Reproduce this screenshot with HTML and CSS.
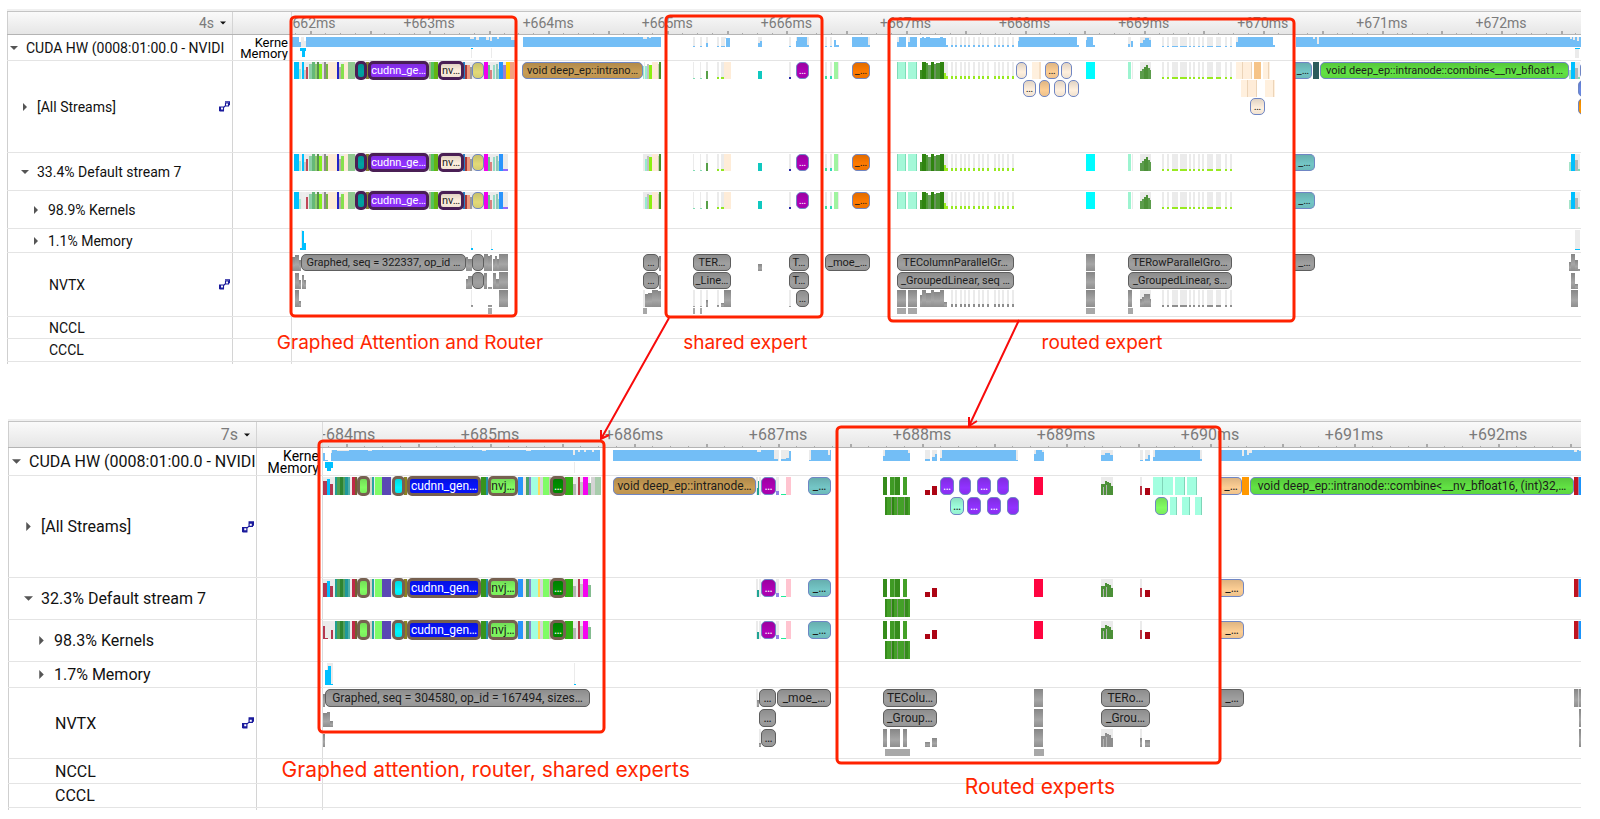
FILE: index.html
```
<!DOCTYPE html>
<html lang="en">
<head>
<meta charset="utf-8">
<title>CUDA timeline comparison</title>
<link rel="stylesheet" href="styles.css">
</head>
<body>
<svg class="defs" aria-hidden="true">
  <defs>
    <linearGradient id="steel" x1="0" y1="0" x2="0" y2="1">
      <stop offset="0" stop-color="#868686"/><stop offset=".6" stop-color="#a6a6a6"/><stop offset="1" stop-color="#8e8e8e"/>
    </linearGradient>
    <symbol id="down" viewBox="0 0 8 8"><path d="M0 2h8L4 6z" fill="currentColor"/></symbol>
    <symbol id="right" viewBox="0 0 8 8"><path d="M2 0v8l4-4z" fill="currentColor"/></symbol>
    <symbol id="link" viewBox="0 0 11 11">
      <path d="M1.500 6h3v3h-3zM6.500 2h3v3h-3zM4.500 6.500L6.700 4.500M.5 5.500v4.500M5 10H.5M6 .8h4.500v3.500" fill="none" stroke="#1a1a9c" stroke-width="1.100"/>
    </symbol>
  </defs>
</svg>
<main class="page">
  <section class="panel first" data-start="292" data-width="1289">
    <div class="row head">
      <div class="name"><button class="scale" type="button">4s <svg class="tri"><use href="#down"/></svg></button></div>
      <div class="legend"></div>
      <div class="track ruler" data-tick="310" data-step="119.1" data-first="662" data-count="11"></div>
    </div>
    <div class="row hw">
      <div class="name l0"><button class="toggle" type="button" aria-label="Collapse"><svg class="tri"><use href="#down"/></svg></button><span class="text">CUDA HW (0008:01:00.0 - NVIDI</span></div>
      <div class="legend"><span>Kerne</span><span>Memory</span></div>
      <div class="track"><div class="lane" data-lane="a.load"></div><div class="lane" data-lane="a.loadmem"></div></div>
    </div>
    <div class="row all">
      <div class="name l1"><button class="toggle" type="button" aria-label="Expand"><svg class="tri"><use href="#right"/></svg></button><span class="text">[All Streams]</span><svg class="link"><use href="#link"/></svg></div>
      <div class="legend"></div>
      <div class="track"><div class="lane" data-lane="a.all0"></div><div class="lane" data-lane="a.all1"></div><div class="lane" data-lane="a.all2"></div></div>
    </div>
    <div class="row stream">
      <div class="name l1"><button class="toggle" type="button" aria-label="Collapse"><svg class="tri"><use href="#down"/></svg></button><span class="text">33.4% Default stream 7</span></div>
      <div class="legend"></div>
      <div class="track"><div class="lane" data-lane="a.stream"></div></div>
    </div>
    <div class="row stream">
      <div class="name l2"><button class="toggle" type="button" aria-label="Expand"><svg class="tri"><use href="#right"/></svg></button><span class="text">98.9% Kernels</span></div>
      <div class="legend"></div>
      <div class="track"><div class="lane" data-lane="a.kernels"></div></div>
    </div>
    <div class="row mem">
      <div class="name l2"><button class="toggle" type="button" aria-label="Expand"><svg class="tri"><use href="#right"/></svg></button><span class="text">1.1% Memory</span></div>
      <div class="legend"></div>
      <div class="track"><div class="lane" data-lane="a.mem"></div></div>
    </div>
    <div class="row nvtx">
      <div class="name l2 leaf"><span class="text">NVTX</span><svg class="link"><use href="#link"/></svg></div>
      <div class="legend"></div>
      <div class="track"><div class="lane" data-lane="a.nv0"></div><div class="lane" data-lane="a.nv1"></div><div class="lane" data-lane="a.nv2"></div><div class="lane short" data-lane="a.nv3"></div></div>
    </div>
    <div class="row thin"><div class="name l2 leaf"><span class="text">NCCL</span></div><div class="legend"></div><div class="track"></div></div>
    <div class="row thin"><div class="name l2 leaf"><span class="text">CCCL</span></div><div class="legend"></div><div class="track"></div></div>
    <div class="row tail"><div class="name"></div><div class="legend"></div><div class="track"></div></div>
  </section>

  <section class="panel second" data-start="323" data-width="1258">
    <div class="row head">
      <div class="name"><button class="scale" type="button">7s <svg class="tri"><use href="#down"/></svg></button></div>
      <div class="legend"></div>
      <div class="track ruler" data-tick="346" data-step="144" data-first="684" data-count="9"></div>
    </div>
    <div class="row hw">
      <div class="name l0"><button class="toggle" type="button" aria-label="Collapse"><svg class="tri"><use href="#down"/></svg></button><span class="text">CUDA HW (0008:01:00.0 - NVIDI</span></div>
      <div class="legend"><span>Kerne</span><span>Memory</span></div>
      <div class="track"><div class="lane" data-lane="b.load"></div><div class="lane" data-lane="b.loadmem"></div></div>
    </div>
    <div class="row all">
      <div class="name l1"><button class="toggle" type="button" aria-label="Expand"><svg class="tri"><use href="#right"/></svg></button><span class="text">[All Streams]</span><svg class="link"><use href="#link"/></svg></div>
      <div class="legend"></div>
      <div class="track"><div class="lane" data-lane="b.all0"></div><div class="lane" data-lane="b.all1"></div></div>
    </div>
    <div class="row stream">
      <div class="name l1"><button class="toggle" type="button" aria-label="Collapse"><svg class="tri"><use href="#down"/></svg></button><span class="text">32.3% Default stream 7</span></div>
      <div class="legend"></div>
      <div class="track"><div class="lane" data-lane="b.stream"></div><div class="lane" data-lane="b.stream1"></div></div>
    </div>
    <div class="row stream">
      <div class="name l2"><button class="toggle" type="button" aria-label="Expand"><svg class="tri"><use href="#right"/></svg></button><span class="text">98.3% Kernels</span></div>
      <div class="legend"></div>
      <div class="track"><div class="lane" data-lane="b.kernels"></div><div class="lane" data-lane="b.stream1"></div></div>
    </div>
    <div class="row mem">
      <div class="name l2"><button class="toggle" type="button" aria-label="Expand"><svg class="tri"><use href="#right"/></svg></button><span class="text">1.7% Memory</span></div>
      <div class="legend"></div>
      <div class="track"><div class="lane" data-lane="b.mem"></div></div>
    </div>
    <div class="row nvtx">
      <div class="name l2 leaf"><span class="text">NVTX</span><svg class="link"><use href="#link"/></svg></div>
      <div class="legend"></div>
      <div class="track"><div class="lane" data-lane="b.nv0"></div><div class="lane" data-lane="b.nv1"></div><div class="lane" data-lane="b.nv2"></div><div class="lane short" data-lane="b.nv3"></div></div>
    </div>
    <div class="row thin"><div class="name l2 leaf"><span class="text">NCCL</span></div><div class="legend"></div><div class="track"></div></div>
    <div class="row thin"><div class="name l2 leaf"><span class="text">CCCL</span></div><div class="legend"></div><div class="track"></div></div>
    <div class="row tail"><div class="name"></div><div class="legend"></div><div class="track"></div></div>
  </section>

  <svg class="marks" viewBox="0 0 1600 819" preserveAspectRatio="none" aria-hidden="true">
    <g class="frames">
      <rect x="291" y="17" width="225" height="299" rx="4"/>
      <rect x="666" y="16" width="156" height="301" rx="4"/>
      <rect x="889" y="19" width="405" height="302" rx="4"/>
      <rect x="319" y="441" width="285" height="291" rx="4"/>
      <rect x="837" y="427" width="383" height="336" rx="4"/>
    </g>
    <path class="arrow" d="M669 318L601 439M601 430v9l8-4M1019 320L969 426M969 417v9l8-5"/>
  </svg>
  <p class="note n1">Graphed Attention and Router</p>
  <p class="note n2">shared expert</p>
  <p class="note n3">routed expert</p>
  <p class="note big n4">Graphed attention, router, shared experts</p>
  <p class="note big n5">Routed experts</p>
</main>
<script src="timeline.js"></script>
</body>
</html>
```
FILE: styles.css
```
* { box-sizing: border-box; }
body { margin: 0; background: #fff; color: #111; font-family: Roboto, "Liberation Sans", sans-serif; }
.defs { display: block; width: 0; height: 0; }
.page { position: relative; display: flex; flex-direction: column; gap: 55px; padding: 9px 19px 9px 7px; }

.panel { border-top: 2px solid #f0f0f0; font-size: 14px; }
.first { --cols: 226px 59px 1fr; --lane: 17px; --gap: 1px; --load: 10px; --memlane: 20px; --short: 6px; }
.second { --cols: 249px 66px 1fr; --lane: 18px; --gap: 2px; --load: 11px; --memlane: 22px; --short: 7px; margin-left: 1px; font-size: 16px; }

.row { display: grid; grid-template-columns: var(--cols); border-bottom: 1px solid #e4e4e4; }
.name { display: flex; align-items: center; gap: 8px; min-width: 0; padding-right: 2px; overflow: hidden; border-left: 1px solid #cfcfcf; border-right: 1px solid #d4d4d4; }
.legend { display: flex; flex-direction: column; align-items: flex-end; justify-content: center; overflow: hidden; border-right: 1px solid #dcdcdc; font-size: 13px; line-height: 11px; color: #000; }
.second .legend { font-size: 14px; line-height: 12px; }
.legend span { padding-right: 3px; }
.text { flex: 1; min-width: 0; overflow: hidden; white-space: nowrap; }
.track { display: flex; flex-direction: column; gap: var(--gap); min-width: 0; padding-top: 1px; overflow: hidden; }

.head { min-height: 24px; border-top: 1px solid #c4c4c4; border-bottom-color: #b4b4b4; background: linear-gradient(#fafafa, #e6e6e6); }
.second .head { min-height: 27px; }
.head .name { justify-content: flex-end; padding-right: 6px; }
.hw { min-height: 26px; }
.hw .track { gap: 1px; padding-top: 2px; }
.all { min-height: 92px; }
.stream { min-height: 38px; }
.mem { min-height: 24px; }
.nvtx { min-height: 64px; }
.thin { min-height: 22px; }
.tail { min-height: 2px; border-bottom: 0; }
.first .thin + .thin { min-height: 23px; }
.second .hw { min-height: 28px; }
.second .all { min-height: 102px; }
.second .stream { min-height: 42px; }
.second .mem { min-height: 26px; }
.second .nvtx { min-height: 71px; }
.second .thin { min-height: 25px; }
.second .thin + .thin { min-height: 24px; }

.l0 { padding-left: 2px; padding-right: 0; }
.l1 { padding-left: 13px; }
.l2 { padding-left: 24px; }
.leaf { padding-left: 41px; }
.second .l0 { padding-left: 3px; }
.second .l1 { padding-left: 15px; }
.second .l2 { padding-left: 28px; }
.second .leaf { padding-left: 46px; }

button { padding: 0; border: 0; background: none; color: #555; font: inherit; line-height: 1; }
.toggle { display: flex; }
.scale { display: flex; align-items: center; gap: 6px; color: #7b7b7b; }
.tri { width: 8px; height: 8px; }
.second .toggle .tri { width: 9px; height: 9px; }
.scale .tri { width: 6px; height: 6px; color: #111; }
.link { flex: none; width: 11px; height: 11px; }
.second .link { width: 12px; height: 12px; }

.ruler { position: relative; color: #7b7b7b; }
.ruler span { position: absolute; top: 3px; line-height: 16px; transform: translateX(-50%); }
.second .ruler span { top: 5px; }
.ruler svg { position: absolute; bottom: 0; left: 0; width: 100%; height: 3px; }

.lane { position: relative; flex: none; height: var(--lane); }
.hw .lane { height: var(--load); }
.mem .lane { height: var(--memlane); }
.short { height: var(--short); }
.lane svg { display: block; width: 100%; height: 100%; }

.pill { position: absolute; top: 0; height: 100%; overflow: hidden; border: 1px solid #6f86c4; border-radius: 5px; background-image: linear-gradient(rgba(0,0,0,.12), rgba(0,0,0,0) 60%, rgba(0,0,0,.06)); color: #1c1c1c; font-size: 11px; line-height: 15px; text-align: center; white-space: nowrap; }
.second .pill { font-size: 12px; line-height: 16px; }
.gray { background-color: #a0a0a0; border-color: #5e5e5e; }
.cream { background-color: #fff0de; }
.sand { background-color: #fdce94; }
.gold { background-color: #c99d55; }
.khaki { background-color: #e2da78; }
.teal { background-color: #74c6c6; }
.green { background-color: #62e344; }
.orange { background-color: #ff7a00; }
.amber { background-color: #ff9600; }
.royal { background-color: #6a8ae6; }
.plum { background-color: #b000b6; color: #fff; }
.purple { background-color: #9132ff; color: #fff; }
.mint { background-color: #9effdc; }
.lime { background-color: #82fc62; }
.sea { background-color: #00a3a3; }
.aqua { background-color: #00f6ff; }
.blue { background-color: #0714ff; color: #fff; }
.forest { background-color: #009000; color: #fff; }
.thick { top: -1px; height: calc(100% + 2px); border: 3px solid #4a1f55; line-height: 13px; }
.second .thick { border-color: #766050; line-height: 14px; }
.cut { border-left: 0; border-top-left-radius: 0; border-bottom-left-radius: 0; }

.marks { position: absolute; top: 0; left: 0; width: 100%; height: 819px; pointer-events: none; }
.frames { fill: none; stroke: #ff2200; stroke-width: 3; }
.arrow { fill: none; stroke: #f80b0b; stroke-width: 2; }
.note { position: absolute; margin: 0; color: #ff2600; font-family: Inter, "Liberation Sans", sans-serif; font-size: 19px; line-height: 24px; white-space: nowrap; }
.big { font-size: 21px; }
.n1 { left: 17.3%; top: 331px; }
.n2 { left: 42.7%; top: 331px; }
.n3 { left: 65.1%; top: 331px; }
.n4 { left: 17.6%; top: 758px; }
.n5 { left: 60.3%; top: 775px; }
```
FILE: timeline.js
```
// Bars are "x width height colour", separated by commas. A height of * fills the
// lane, a negative height hangs from the top. Colour g is the idle backdrop,
// b the load blue, s the NVTX steel.
const colours = { g: '#ebebeb', b: '#73bef6', s: 'url(#steel)', c: '#00c0ff' };

const spread = (xs, h, c) => xs.map(v => {
  const [x, w] = Array.isArray(v) ? v : [v, 2];
  return `${x} ${w} * g,${x} ${w} ${h} ${c}`;
}).join(',');

const dotsA = [951, 955, 960, 964, 968, 973, 978, 982, 987, 994, 998, 1002, 1007, 1012];
const dotsB = [1162, 1167, [1172, 6], [1180, 7], 1185, 1189, 1193, 1198, 1202, [1207, 6], [1216, 5], 1225, 1230];

const graphA = '294 214 * g,294 5 * c,299 2 10 #a8ead0,302 2 * c,304 2 9 #c8c8c8,306 2 12 #c04858,309 3 15 #8ccfa8,312 3 * #66b878,315 2 15 #8fcc70,317 2 * #5a8f50,319 3 15 #84f020,322 2 * #e4dce0,324 2 * #8c8c8c,326 2 15 #78b840,328 9 * #feebd6,337 2 * #2222c8,339 2 12 #b8b0a8,341 3 15 #86e04c,344 4 * #feebd6,348 7 * #90c890,366 3 * #84842c,429 2 * #a4b48c,431 3 * #54c458,434 4 * #64b414,463 2 * #2a80c4,465 2 14 #a43838,467 3 14 #f0987c,470 2 12 #9a9a9a,484 4 * #f000ee,488 2 14 #66c088,490 2 9 #d88080,493 2 14 #94dcc4,496 2 15 #90c8b8,498 1 10 #94dcc4,499 4 * #2a94fc';
const greensA = '920 2 9 #3f8f22,922 4 * #2f8410,926 2 16 #4f9a38,928 3 14 #689e5c,931 3 * #2f8410,934 2 15 #68945c,936 4 16 #489430,940 4 * #2f8410,944 4 * g,944 2 6 #9cec20,946 2 3 #9cec20';
const histA = '1140 11 * g,1140 2 8 #5c9c4c,1142 2 10 #5c9c4c,1144 2 12 #4c9038,1146 2 14 #4c9038,1148 2 11 #5c9c4c,1150 1 9 #5c9c4c';
const midA = '693 1 * g,700 1 * g,693 2 1 #84dcb4,700 2 1 #84dcb4,706 2 * g,706 2 8 #58a048,717 2 * g,717 2 2 #90e820,721 3 * g,721 3 2 #90e820,724 7 * #feecd8,758 4 8 #10c8c0,789 2 * g,789 2 2 #2828a8,825 2 * g,825 2 3 #44e098,830 2 * g,830 2 3 #30d8b8,834 4 * #a0f4a0,838 1 * g'
  + ',897 9 * #a4f8d8,908 9 * #a4f8d8,897 1 * #7edcb8,905 1 * #7edcb8,916 1 * #7edcb8,' + greensA + ',' + spread(dotsA, 3, '#98ea20')
  + ',1086 9 * #00fcff,1128 3 * #9cf4d0,1132 1 * g,' + histA + ',' + spread(dotsB, 2, '#98ea20');
const endA = '1569 2 9 #a4e4c8,1571 4 * c,1575 5 * g,1575 3 11 #b0b8b8,1578 2 2 #84dcb4';
const tailA = '644 1 * g,645 2 12 #98ecd0,647 2 15 #c0c0c0,649 3 14 #8cf010,652 6 * #feead6,658 1 15 #c8d0b8,659 2 * #489028';
const pillsA = [[355, 12, 'sea thick'], [368, 61, 'purple thick', 'cudnn_ge…'], [438, 26, 'cream thick', 'nv…'], [472, 12, 'khaki'], [796, 13, 'plum', '…'], [852, 18, 'orange', '_…']];
const streamA = { bars: graphA + ',503 5 2 #9468fc,643 3 * g,645 16 * g,' + tailA + ',' + midA + ',' + endA, pills: [...pillsA, [1295, 20, 'teal cut', '_…']] };

const graphB = '323 267 * g,331 1 * g,335 2 * #20a090,337 3 * #50a050,340 3 * #2f8430,343 2 * #50a060,345 3 * #20989a,348 2 * #50b0a8,350 2 * g,352 3 * #c02848,355 2 * #706030,370 2 * #d8d4c8,372 2 * #2ca4a4,375 7 * #80fc66,382 9 * #5a48b4,404 3 * #8a8420,481 5 * #36941c,486 2 * #2890a8,518 5 * #2a94fc,523 3 * #f4ece0,526 3 * #48a468,529 2 * #8888d0,531 7 * #a2ffe0,538 2 * #fcdc5c,540 3 * #d8d8d8,543 6 * #80fc66,549 2 * #c8c8b8,565 8 * #32b014,573 3 11 #b4b8b4,576 2 * #e8e8e8,578 2 * #b43c4c,580 3 13 #c4c4c4,583 5 * #f404f0,588 3 12 #84bc90';
const startB = '323 4 14 #b43850,327 3 16 c,330 3 11 #b43850,';
const greens0 = '883 4 * #368c1c,890 5 * #3f9a24,895 5 * #368c1c,894 1 * #6cb058,903 4 * #44a028';
const greens1 = '885 25 * #44a028,885 2 * #368c1c,891 1 * #7a9a6c,892 2 * #2f8414,897 1 * #7a9a6c,904 1 * #7a9a6c,905 3 * #368c1c';
const shapeB = c => `1101 12 * g,1101 2 11 ${c},1103 2 11 ${c},1105 2 14 ${c},1107 2 13 ${c},1109 2 12 ${c},1111 2 9 ${c},1103 1 8 #b4b4b4,1106 1 10 #b4b4b4`;
const midB = '756 2 * g,757 2 7 #20a494,759 2 * g,776 3 * g,776 3 4 #9080e8,781 5 1 #20ec98,786 5 * #ffc4d0,' + greens0
  + ',925 5 5 #ac0414,932 5 9 #ac0414,1034 9 * #ff0440,' + shapeB('#4c9038') + ',1140 2 * g,1140 2 9 #b83040,1145 5 7 #ac0414,1574 4 * #c01420,1578 1 * #9880a8,1579 3 * #1a94fc';
const pillsB = [[357, 13, 'lime thick'], [392, 13, 'aqua thick'], [407, 74, 'blue thick', 'cudnn_gen…'], [488, 30, 'lime thick', 'nvj…'], [550, 16, 'forest thick', '…'], [761, 15, 'plum', '…'], [808, 23, 'teal', '_…']];

const lanes = {
  'a.load': { bars: '292 7 10 b,299 2 5 b,301 3 * g,304 3 6 g,306 211 * b,470 4 -2 g,476 3 -3 g,486 3 -3 g,490 2 -4 g,497 2 -2 g,511 4 -3 g,523 138 * b,643 4 -2 g,649 2 -1 g,'
    + spread([693, 700], 1, 'b') + ',706 2 * g,706 2 4 b,717 2 * g,717 2 1 b,721 4 * g,721 4 1 b,724 2 -2 g,726 4 9 b,758 4 * g,758 4 4 b,760 2 6 b,789 2 * g,789 2 1 b,796 13 * b,796 1 -4 g,807 2 -8 g,825 2 * g,825 2 1 b,830 2 * g,830 2 1 b,834 2 7 b,836 3 2 b,852 18 * b,868 2 -8 g,'
    + '897 9 * b,897 2 -5 g,908 9 * b,908 2 -5 g,920 26 9 b,922 2 10 b,926 4 10 b,940 3 10 b,944 4 2 b,' + spread(dotsA, 2, 'b') + ',1018 59 * b,1077 2 2 b,1018 1 -4 g,1086 7 * b,1093 2 2 b,1086 1 -3 g,1128 3 * g,1128 2 3 b,1131 2 6 b,1140 11 * g,1140 11 4 b,1143 8 7 b,1145 4 9 b,' + spread(dotsB, 1, 'b') + ',1236 37 * b,1236 2 -5 g,1273 2 2 b,1296 286 * b,1313 2 -2 g,1317 2 -7 g,1570 2 -2 g,1573 2 -3 g,1577 2 -4 g' },
  'a.loadmem': { bars: '300 6 -3 c,302 3 -9 c,471 1 * g,471 2 -1 c,491 1 * g,1575 4 * g,1575 5 -1 c' },
  'a.all0': { bars: graphA + ',503 3 14 #9c80d0,506 4 * #ffd400,510 4 * #f4a080,643 4 13 #98ecd0,' + tailA + ',' + midA
      + ',1032 9 * #fff0de,1039 2 * #f6dfc4,1236 6 * #fff0de,1242 9 * #ffeedb,1242 1 * #ecd4b8,1251 1 * #ecd4b8,1254 7 * #f6c488,1263 7 * #fff0de,1268 1 * #ecd4b8,1313 6 * #2c5c5c,' + endA,
    pills: [...pillsA, [522, 121, 'gold', 'void deep_ep::intrano…'], [1016, 11, 'cream'], [1045, 14, 'sand', '…'], [1061, 11, 'cream'], [1295, 17, 'teal cut', '_…'], [1320, 249, 'green', 'void deep_ep::intranode::combine<__nv_bfloat1…'], [1580, 16, 'royal']] },
  'a.all1': { bars: '1241 6 * #fff0de,1247 10 * #feecd8,1247 1 * #ecd4b8,1256 1 * #ecd4b8,1265 10 * #fff0de,1273 1 * #ecd4b8',
    pills: [[1023, 13, 'cream', '…'], [1039, 11, 'sand'], [1054, 12, 'cream'], [1068, 11, 'cream'], [1578, 16, 'royal']] },
  'a.all2': { pills: [[1250, 15, 'cream', '…'], [1578, 16, 'amber']] },
  'a.stream': streamA,
  'a.kernels': { bars: streamA.bars + ',302 4 * #ededed', pills: streamA.pills },
  'a.mem': { bars: '301 2 * g,302 2 19 c,304 2 7 c,300 5 2 c,471 1 * g,471 2 2 c,491 1 * g,491 2 1 c,1575 5 * g,1575 5 1 c' },
  'a.nv0': { bars: '292 3 14 s,295 4 16 s,299 2 11 s,466 2 14 s,468 4 12 s,484 4 17 s,488 2 15 s,490 2 16 s,493 2 12 s,495 2 15 s,497 2 12 s,499 9 * s,659 2 15 s,758 4 7 s,1086 9 * s,1569 2 9 s,1571 4 * s,1575 3 11 s,1578 2 2 s',
    pills: [[301, 165, 'gray', 'Graphed, seq = 322337, op_id …'], [472, 12, 'gray'], [643, 16, 'gray', '…'], [693, 38, 'gray', 'TER…'], [789, 20, 'gray', 'T…'], [825, 45, 'gray', '_moe_…'], [897, 117, 'gray', 'TEColumnParallelGr…'], [1128, 104, 'gray', 'TERowParallelGro…'], [1295, 20, 'gray cut', '_…']] },
  'a.nv1': { bars: '295 4 16 s,299 2 9 s,302 2 14 s,304 2 9 s,466 2 10 s,468 4 13 s,484 3 16 s,488 4 2 s,493 3 16 s,496 3 10 s,499 9 * s,659 2 14 s,1086 9 * s,1571 4 16 s,1575 3 5 s',
    pills: [[472, 12, 'gray'], [643, 16, 'gray', '…'], [693, 38, 'gray', '_Line…'], [789, 20, 'gray', 'T…'], [897, 117, 'gray', '_GroupedLinear, seq …'], [1128, 104, 'gray', '_GroupedLinear, s…']] },
  'a.nv2': { bars: '295 4 * s,299 2 6 s,471 1 * g,471 2 2 s,488 4 2 s,499 9 * s,643 2 * g,645 3 13 s,648 4 14 s,652 6 * s,658 3 16 s,693 2 * g,693 2 1 s,700 2 * g,700 2 1 s,706 2 * g,706 2 7 s,717 2 * g,717 2 2 s,721 3 4 s,724 7 * s,789 2 * g,789 2 1 s,897 9 * s,908 9 * s,920 2 12 s,922 4 * s,926 5 14 s,931 3 * s,934 6 15 s,940 4 * s,944 3 5 s,' + spread(dotsA, 3, '#8e8e8e') + ',1086 9 * s,1128 4 * s,1140 11 * g,1140 11 8 s,1142 8 10 s,1144 5 13 s,1148 2 13 s,' + spread(dotsB, 2, '#8e8e8e') + ',1571 7 * s', pills: [[796, 13, 'gray', '…']] },
  'a.nv3': { bars: '488 4 * #a8a8a8,643 4 * #a8a8a8,693 2 * #a8a8a8,700 2 * #a8a8a8,897 9 * #a8a8a8,908 9 * #a8a8a8,1086 9 * #a8a8a8,1128 5 * #a8a8a8' },

  'b.load': { bars: '323 2 8 b,325 3 1 b,331 269 * b,331 1 -3 g,337 12 -1 g,368 4 -1 g,482 4 -1 g,526 5 -1 g,573 2 -5 g,578 2 -2 g,584 2 -2 g,592 2 -2 g,613 161 * b,757 4 -2 g,774 5 * g,774 4 2 b,781 8 * g,781 5 2 b,786 3 3 b,789 2 10 b,809 22 * b,809 2 -10 g,828 2 -5 g,'
    + '883 27 * b,883 2 -6 g,908 2 -3 g,925 5 * g,925 5 2 b,932 5 * g,932 3 4 b,935 2 7 b,940 78 * b,940 2 -8 g,1016 2 -10 g,1034 10 * b,1034 2 -4 g,1042 2 -2 g,1101 12 * g,1101 12 6 b,1105 5 8 b,1140 3 * g,1140 3 1 b,1145 5 * g,1145 5 2 b,1148 2 6 b,1153 49 * b,1153 2 -7 g,1200 2 -9 g,1221 361 * b,1242 2 -6 g,1247 2 -5 g,1249 3 -3 g,1574 3 -2 g,1579 2 -1 g' },
  'b.loadmem': { bars: '325 8 -6 c,327 4 -9 c,574 1 * g' },
  'b.all0': { bars: graphB + ',' + startB + '591 4 * #d4d4d4,595 6 * #a8ccac,756 3 14 #20a494,' + midB + ',1153 9 * #a2ffe0,1163 10 * #a2ffe0,1162 1 * #80d4b8,1175 10 * #a2ffe0,1184 1 * #80d4b8,1187 10 * #a2ffe0,1196 1 * #80d4b8,1242 7 * #ff9800',
    pills: [...pillsB, [613, 143, 'gold', 'void deep_ep::intranode…'], [940, 14, 'purple', '…'], [959, 12, 'purple'], [977, 14, 'purple', '…'], [997, 12, 'purple'], [1221, 21, 'sand cut', '_…'], [1250, 324, 'green', 'void deep_ep::intranode::combine<__nv_bfloat16, (int)32,…']] },
  'b.all1': { bars: greens1 + ',1170 7 * #a2ffe0,1176 1 * #80d4b8,1182 8 * #a2ffe0,1189 1 * #80d4b8,1195 7 * #a2ffe0,1201 1 * #80d4b8',
    pills: [[950, 14, 'mint', '…'], [967, 14, 'purple', '…'], [987, 14, 'purple', '…'], [1007, 12, 'purple'], [1155, 13, 'lime']] },
  'b.stream': { bars: graphB + ',' + startB + midB, pills: [...pillsB, [1221, 23, 'sand cut', '_…']] },
  'b.stream1': { bars: greens1 },
  'b.kernels': { bars: graphB + ',323 2 13 #b43850,325 3 1 #b43850,331 2 9 #b43850,' + midB, pills: [...pillsB, [1221, 23, 'sand cut', '_…']] },
  'b.mem': { bars: '327 6 * g,325 3 15 c,328 3 19 c,331 2 1 c,574 1 * g,574 2 1 c' },
  'b.nv0': { bars: '323 2 13 s,756 2 * g,757 2 7 s,1034 9 * s,1574 4 * s,1578 1 * #c8c8c8,1579 3 * s',
    pills: [[325, 265, 'gray', 'Graphed, seq = 304580, op_id = 167494, sizes…'], [759, 17, 'gray', '…'], [777, 54, 'gray', '_moe_…'], [883, 54, 'gray', 'TEColu…'], [1101, 49, 'gray', 'TERo…'], [1221, 23, 'gray cut', '_…']] },
  'b.nv1': { bars: '323 4 14 s,327 3 15 s,330 3 6 s,1034 9 * s,1579 3 * s', pills: [[759, 17, 'gray', '…'], [883, 54, 'gray', '_Group…'], [1101, 49, 'gray', '_Grou…']] },
  'b.nv2': { bars: '323 2 13 s,759 2 * g,759 2 4 s,883 4 * s,890 10 * s,903 4 * s,925 5 5 s,932 5 9 s,1034 9 * s,' + shapeB('#8e8e8e') + ',1140 2 * g,1140 2 9 s,1145 5 7 s,1579 3 * s', pills: [[761, 15, 'gray', '…']] },
  'b.nv3': { bars: '885 25 * #a8a8a8,1034 10 * #a8a8a8' }
};

function svgFor(start, width, height, bars) {
  const rects = bars.split(',').filter(Boolean).map(bar => {
    const [x, w, h, c] = bar.split(' ');
    const size = h === '*' ? height : Math.abs(h);
    return `<rect x="${x}" y="${h < 0 ? 0 : height - size}" width="${w}" height="${size}" fill="${colours[c] || c}"/>`;
  }).join('');
  return `<svg viewBox="${start} 0 ${width} ${height}" preserveAspectRatio="none" shape-rendering="crispEdges">${rects}</svg>`;
}

document.querySelectorAll('.panel').forEach(panel => {
  const start = +panel.dataset.start;
  const width = +panel.dataset.width;
  const share = v => (v / width * 100) + '%';

  panel.querySelectorAll('.lane').forEach(lane => {
    const { bars = '', pills = [] } = lanes[lane.dataset.lane];
    lane.innerHTML = svgFor(start, width, lane.clientHeight, bars);
    pills.forEach(([x, w, kind, text = '']) => {
      const pill = document.createElement('span');
      pill.className = 'pill ' + kind;
      pill.style.left = share(x - start);
      pill.style.width = share(w);
      pill.textContent = text;
      lane.append(pill);
    });
  });

  const ruler = panel.querySelector('.ruler');
  const { tick, step, first, count } = ruler.dataset;
  const ticks = [];
  for (let i = -1; i < count * 8 + 8; i++) {
    ticks.push(`${Math.round(+tick + i * step / 8)} ${i % 4 ? 1 : 2} ${i % 4 ? 1 : 3} #aaa`);
  }
  ruler.innerHTML = svgFor(start, width, 3, ticks.join(','));
  for (let i = 0; i < count; i++) {
    const label = document.createElement('span');
    label.textContent = `+${+first + i}ms`;
    label.style.left = share(+tick + i * step - start);
    ruler.append(label);
  }
});
```
